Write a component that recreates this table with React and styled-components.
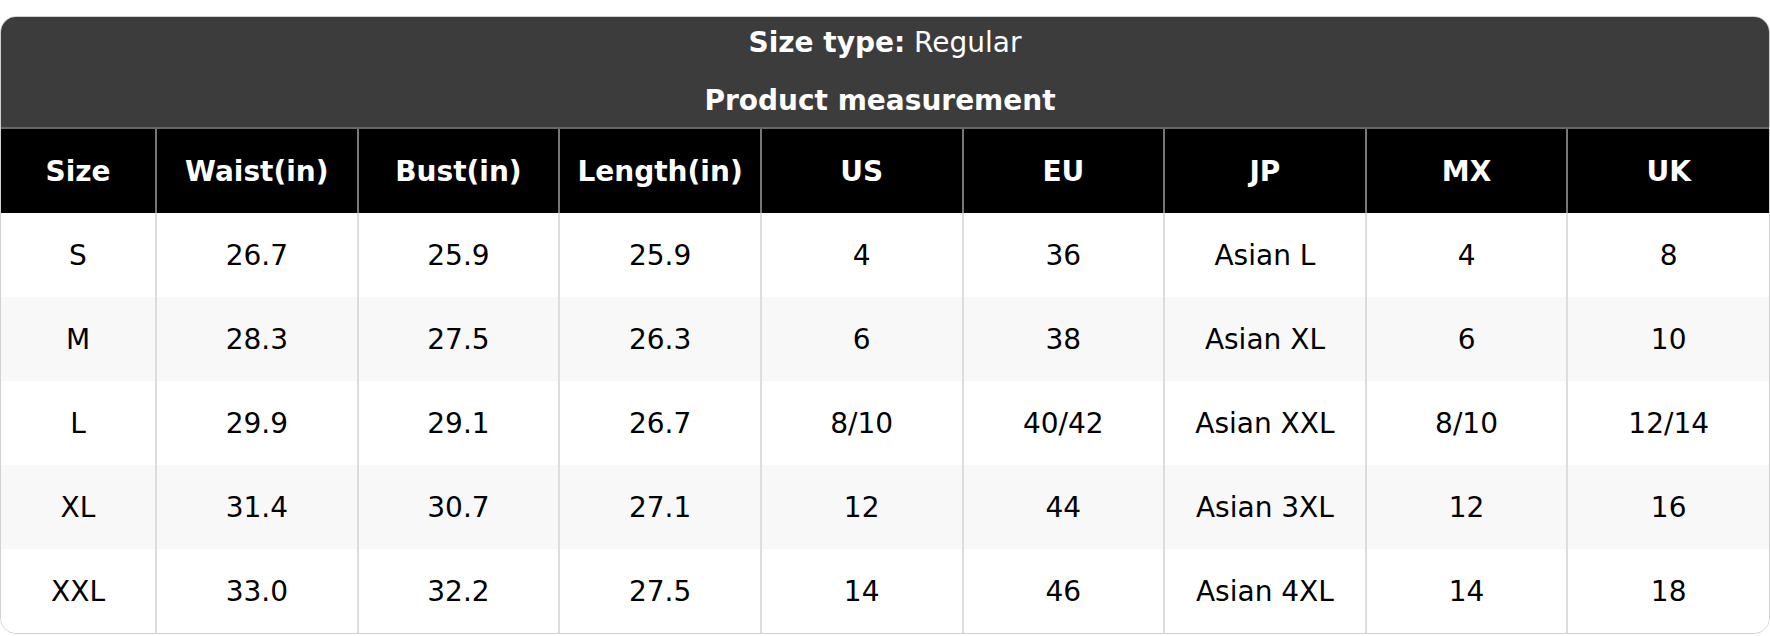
import React from 'react';
import styled, { createGlobalStyle } from 'styled-components';

const Global = createGlobalStyle`
  html, body {
    margin: 0;
    padding: 0;
    background: #ffffff;
  }
  body {
    font-family: "DejaVu Sans", Verdana, sans-serif;
    color: #000;
  }
`

const Page = styled.div`
  padding-top: 16px;
  width: 1770px;
`

const Card = styled.div`
  border: 1.5px solid #d0d0d0;
  border-radius: 16px;
  overflow: hidden;
  box-sizing: border-box;
  width: 1770px;
`

const Caption = styled.div`
  background: #3c3c3c;
  color: #ffffff;
  display: flex;
  flex-direction: column;
  align-items: center;
  height: 110px;
  font-size: 28px;
`

const TypeLine = styled.div`
  height: 52px;
  line-height: 52px;
`

const TitleLine = styled.div`
  margin-top: 6px;
  height: 52px;
  line-height: 52px;
  padding-right: 10px;
  font-weight: bold;
`

const Strong = styled.span`
  font-weight: bold;
`

const Table = styled.table`
  width: 100%;
  border-collapse: collapse;
  table-layout: fixed;
  font-size: 28px;
`

const HeadCell = styled.th`
  background: #000000;
  color: #ffffff;
  font-weight: bold;
  height: 84px;
  padding: 0;
  text-align: center;
  border-top: 2px solid #666666;
  border-left: 2px solid #777777;
  &:first-child {
    border-left: none;
  }
`

const Row = styled.tr`
  background: ${(p) => (p.striped ? '#f8f8f8' : '#ffffff')};
`

const Cell = styled.td`
  height: 84px;
  padding: 0;
  text-align: center;
  border-left: 2px solid #dddddd;
  &:first-child {
    border-left: none;
  }
`

const columns = ['Size', 'Waist(in)', 'Bust(in)', 'Length(in)', 'US', 'EU', 'JP', 'MX', 'UK'];

const rows = [
  ['S', '26.7', '25.9', '25.9', '4', '36', 'Asian L', '4', '8'],
  ['M', '28.3', '27.5', '26.3', '6', '38', 'Asian XL', '6', '10'],
  ['L', '29.9', '29.1', '26.7', '8/10', '40/42', 'Asian XXL', '8/10', '12/14'],
  ['XL', '31.4', '30.7', '27.1', '12', '44', 'Asian 3XL', '12', '16'],
  ['XXL', '33.0', '32.2', '27.5', '14', '46', 'Asian 4XL', '14', '18'],
];

export default function App() {
  return (
    <Page>
      <Global />
      <Card>
        <Caption>
          <TypeLine>
            <Strong>Size type:</Strong> Regular
          </TypeLine>
          <TitleLine>Product measurement</TitleLine>
        </Caption>
        <Table>
          <colgroup>
            <col style={{ width: '155px' }} />
            {columns.slice(1).map((c) => (
              <col key={c} />
            ))}
          </colgroup>
          <thead>
            <tr>
              {columns.map((c) => (
                <HeadCell key={c}>{c}</HeadCell>
              ))}
            </tr>
          </thead>
          <tbody>
            {rows.map((r, i) => (
              <Row key={r[0]} striped={i % 2 === 1}>
                {r.map((v, j) => (
                  <Cell key={j}>{v}</Cell>
                ))}
              </Row>
            ))}
          </tbody>
        </Table>
      </Card>
    </Page>
  );
}
